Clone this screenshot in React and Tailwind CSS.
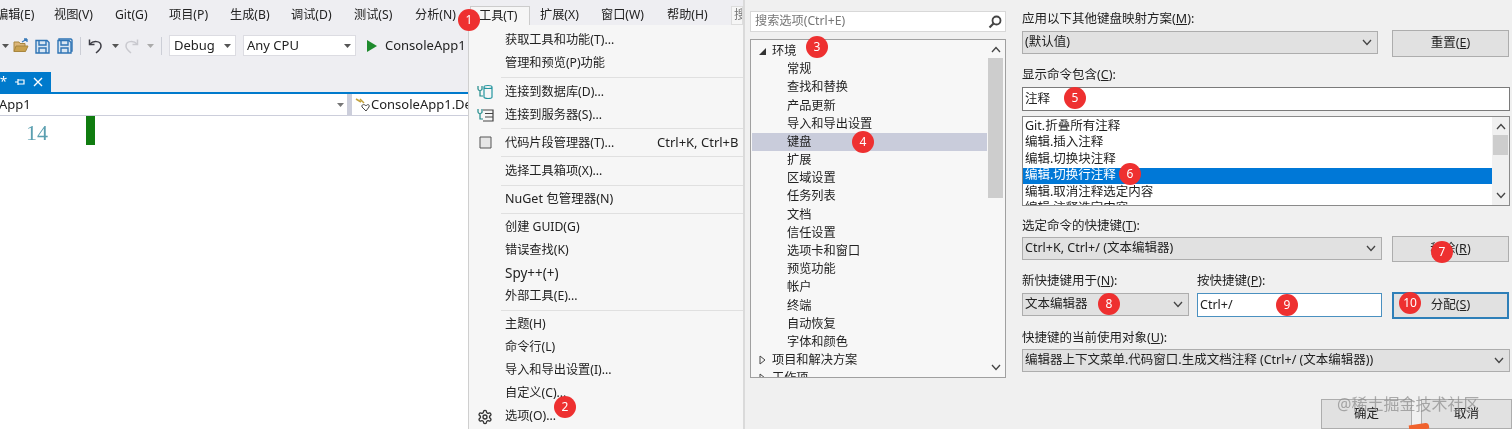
import React from "react";

const menuBar = [
  ["编辑(E)", "-ml-[4px] w-[58px]"],
  ["视图(V)", "w-[61px]"],
  ["Git(G)", "w-[54px]"],
  ["项目(P)", "w-[61px]"],
  ["生成(B)", "w-[61px]"],
  ["调试(D)", "w-[63px]"],
  ["测试(S)", "w-[61px]"],
  ["分析(N)", "w-[55px]"],
];
const menuBar2 = [
  ["扩展(X)", "w-[71px] pl-[10px]"],
  ["窗口(W)", "w-[66px]"],
  ["帮助(H)", "w-[64px]"],
];

function Chevron({ up }) {
  return (
    <svg width="10" height="7" viewBox="0 0 10 7" fill="none" stroke="#444" strokeWidth="1.3">
      <path d={up ? "M1 6 L5 1.5 L9 6" : "M1 1 L5 5.5 L9 1"} />
    </svg>
  );
}
function Caret({ color = "#555" }) {
  return (
    <svg width="7" height="4" viewBox="0 0 7 4" className="shrink-0">
      <path d="M0 0 H7 L3.5 4 Z" fill={color} />
    </svg>
  );
}
function FolderIcon() {
  return (
    <svg width="16" height="15" viewBox="0 0 16 15">
      <path d="M1 4 H6 L7 5.5 H12 V13.5 H1 Z" fill="#dcb67a" stroke="#a8863f" />
      <path d="M3 8 H15 L12.5 13.5 H1 Z" fill="#c9a14f" stroke="#a8863f" />
      <path d="M9 4 L14 1 M14 1 L11 1 M14 1 L14 4" stroke="#3a7ab8" strokeWidth="1.3" fill="none" />
    </svg>
  );
}
function SaveIcon({ double }) {
  return (
    <svg width="16" height="16" viewBox="0 0 16 16" fill="none" stroke="#2f74b5" strokeWidth="1.4">
      {double && <path d="M2 3 V1 H14 L15 2 V13 H14" />}
      <path d="M1 2.5 H12 L14 4.5 V15 H1 Z" fill="#d8e6f3" />
      <path d="M4 2.5 V7 H11 V2.5 M4 15 V10 H11 V15" />
    </svg>
  );
}
function UndoIcon({ redo }) {
  return (
    <svg width="15" height="16" viewBox="0 0 15 16" fill="none" stroke={redo ? "#c9c9cf" : "#3c3c44"} strokeWidth="1.5" className={redo ? "-scale-x-100" : ""}>
      <path d="M1.5 1.5 V6.5 H6.5" />
      <path d="M2 6 C5 2.5 13 2.5 13 8 C13 11 10.5 13 8 15" />
    </svg>
  );
}
function DbIcon({ server }) {
  return (
    <svg width="17" height="16" viewBox="0 0 17 16" fill="none" strokeWidth="1.2">
      <path d="M1 2 V5 C1 7 5 7 5 5 V2 M3 7 V12 H6" stroke="#1f8a8a" />
      {server ? (
        <path d="M6 3 H16 V14 H6 M8 6.500 H16 M8 10 H16" stroke="#444" />
      ) : (
        <path d="M7 3 C7 1 15 1 15 3 V13 C15 15 7 15 7 13 Z M7 3 C7 5 15 5 15 3" stroke="#2496a0" />
      )}
    </svg>
  );
}
function GearIcon() {
  return (
    <svg width="16" height="16" viewBox="0 0 24 24" fill="none" stroke="#333" strokeWidth="2">
      <path d="M12.2 2h-.4a2 2 0 0 0-2 2v.2a2 2 0 0 1-1 1.700l-.4.300a2 2 0 0 1-2 0l-.2-.1a2 2 0 0 0-2.700.700l-.2.400a2 2 0 0 0 .7 2.700l.2.100a2 2 0 0 1 1 1.700v.5a2 2 0 0 1-1 1.700l-.2.100a2 2 0 0 0-.7 2.700l.2.400a2 2 0 0 0 2.700.700l.2-.1a2 2 0 0 1 2 0l.4.300a2 2 0 0 1 1 1.700v.2a2 2 0 0 0 2 2h.4a2 2 0 0 0 2-2v-.2a2 2 0 0 1 1-1.700l.4-.300a2 2 0 0 1 2 0l.2.100a2 2 0 0 0 2.700-.700l.2-.400a2 2 0 0 0-.7-2.700l-.2-.1a2 2 0 0 1-1-1.700v-.5a2 2 0 0 1 1-1.700l.2-.1a2 2 0 0 0 .7-2.700l-.2-.4a2 2 0 0 0-2.700-.7l-.2.100a2 2 0 0 1-2 0l-.4-.300a2 2 0 0 1-1-1.700V4a2 2 0 0 0-2-2z" />
      <circle cx="12" cy="12" r="3" />
    </svg>
  );
}
function MenuRow({ icon, text, shortcut, textClass = "" }) {
  return (
    <div className="h-[23px] flex items-center relative">
      <div className="w-[36px] shrink-0 flex justify-center pr-[4px]">{icon}</div>
      <span className={`whitespace-nowrap ${textClass}`}>{text}</span>
      {shortcut && <span className="absolute left-[188px] whitespace-nowrap text-[13px]">{shortcut}</span>}
    </div>
  );
}
function MenuSep() {
  return (
    <div className="h-[5.200px] pl-[32px] flex items-center">
      <div className="h-px w-full bg-[#e0e0e0]" />
    </div>
  );
}
function Acc({ pre, k, post = "):" }) {
  return (
    <>
      {pre}(<span className="underline">{k}</span>{post}
    </>
  );
}
function Label({ className = "", children }) {
  return <div className={`h-4 leading-4 whitespace-nowrap text-[#222] ${className}`}>{children}</div>;
}
function Combo({ className = "", children }) {
  return (
    <div className={`h-[23px] bg-[#e1e1e1] border border-[#adadad] flex items-center justify-between px-[2px] ${className}`}>
      <span className="whitespace-nowrap">{children}</span>
      <span className="mr-[3px]"><Chevron /></span>
    </div>
  );
}
function Button({ className = "", children }) {
  return (
    <div className={`bg-[#e1e1e1] flex items-center justify-center ${className}`}>
      <span className="whitespace-nowrap">{children}</span>
    </div>
  );
}
const tree = ["常规", "查找和替换", "产品更新", "导入和导出设置", "键盘", "扩展", "区域设置", "任务列表", "文档", "信任设置", "选项卡和窗口", "预览功能", "帐户", "终端", "自动恢复", "字体和颜色"];
const commands = ["Git.折叠所有注释", "编辑.插入注释", "编辑.切换块注释", "编辑.切换行注释", "编辑.取消注释选定内容", "编辑.注释选定内容"];

const badges = [
  ["1", "left-[458px] top-[9px]"],
  ["2", "left-[554px] top-[396px]"],
  ["3", "left-[806px] top-[36px]"],
  ["4", "left-[852px] top-[131px]"],
  ["5", "left-[1064px] top-[87px]"],
  ["6", "left-[1119px] top-[163px]"],
  ["7", "left-[1431px] top-[241px]"],
  ["8", "left-[1098px] top-[293px]"],
  ["9", "left-[1276px] top-[294px]"],
  ["10", "left-[1399px] top-[292px]"],
];

export default function App() {
  return (
    <div className="relative flex w-[1512px] h-[429px] overflow-hidden text-[12.2px] text-[#222] blur-[0.3px] [font-family:'Noto_Sans','Noto_Sans_CJK_SC',sans-serif]">
      {/* Visual Studio */}
      <div className="relative w-[743px] shrink-0 flex flex-col bg-[#eeeef2]">
        <div className="h-[25px] flex items-center shrink-0 pt-[6px] overflow-hidden">
          {menuBar.map(([t, w]) => (
            <div key={t} className={`${w} shrink-0 whitespace-nowrap`}>{t}</div>
          ))}
          <div className="w-[60px] h-[19px] shrink-0 bg-[#f6f6f6] border border-b-0 border-[#ccc] pl-[8px] flex items-center whitespace-nowrap">工具(T)</div>
          {menuBar2.map(([t, w]) => (
            <div key={t} className={`${w} shrink-0 whitespace-nowrap`}>{t}</div>
          ))}
          <div className="bg-[#f6f6f6] h-[19px] flex-1 pl-[2px] flex items-center text-[#777] overflow-hidden border border-[#ddd]">搜</div>
        </div>
        <div className="h-[41px] shrink-0 flex items-center pl-[2px]">
          <Caret />
          <div className="ml-[4px]"><FolderIcon /></div>
          <div className="ml-[6px]"><SaveIcon /></div>
          <div className="ml-[6px]"><SaveIcon double /></div>
          <div className="w-px h-[18px] bg-[#ccced6] ml-[7px]" />
          <div className="ml-[7px]"><UndoIcon /></div>
          <div className="ml-[9px]"><Caret /></div>
          <div className="ml-[5px]"><UndoIcon redo /></div>
          <div className="ml-[8px]"><Caret color="#aaa" /></div>
          <div className="w-px h-[18px] bg-[#ccced6] ml-[7px]" />
          <div className="ml-[7px] w-[67px] h-[21px] bg-white border border-[#dcdce2] flex items-center justify-between pl-[4px] pr-[4px] text-[13px]">Debug<Caret /></div>
          <div className="ml-[7px] w-[113px] h-[21px] bg-white border border-[#dcdce2] flex items-center justify-between pl-[3px] pr-[4px] text-[13px]">Any CPU<Caret /></div>
          <svg width="12" height="14" viewBox="0 0 12 14" className="ml-[10px]"><path d="M1 1 L11 7 L1 13 Z" fill="#1e8a2d" /></svg>
          <span className="ml-[7px] text-[13px] whitespace-nowrap">ConsoleApp1</span>
        </div>
        <div className="h-[6px] shrink-0" />
        <div className="h-[20px] shrink-0 w-[51px] bg-[#007acc] text-white flex items-center pl-[1px] gap-[8px]">
          <span className="text-[13px] -ml-[1px]">*</span>
          <svg width="10" height="10" viewBox="0 0 10 10" fill="none" stroke="#fff" strokeWidth="1.200"><path d="M0 5 H3 M3 2 V8 M3 3 H9 V7 H3" /></svg>
          <svg width="10" height="10" viewBox="0 0 10 10" fill="none" stroke="#fff" strokeWidth="1.400"><path d="M1 1 L9 9 M9 1 L1 9" /></svg>
        </div>
        <div className="h-[2px] shrink-0 bg-[#007acc]" />
        <div className="h-[22px] shrink-0 flex bg-white border-b border-[#cccedb]">
          <div className="w-[347px] flex items-center justify-between pr-[3px] pt-px overflow-hidden text-[13px]">
            <span className="-ml-[1px]">App1</span><Caret color="#777" />
          </div>
          <div className="w-[5px] bg-[#cccedb]" />
          <div className="flex-1 flex items-center pl-[3px] pt-px gap-[1px] text-[13px] whitespace-nowrap overflow-hidden">
            <svg width="15" height="14" viewBox="0 0 15 14" fill="none"><path d="M1 1 L6 4 M5 1 L9 5" stroke="#c2a13a" strokeWidth="1.500" /><path d="M11 13 L7 9 C6 6 10 6 11 8 C12 6 15 6 14 9 Z" stroke="#444" strokeWidth="1" /></svg>
            ConsoleApp1.Demo
          </div>
        </div>
        <div className="flex-1 bg-white flex items-start">
          <div className="w-[86px] shrink-0 pl-[26px] pt-[5px] text-[22px] leading-[24px] text-[#5a9fb0] [font-family:'Liberation_Serif',serif]">14</div>
          <div className="w-[9px] h-[29px] bg-[#107c10]" />
        </div>

        {/* Tools menu */}
        <div className="absolute left-[468px] top-[25px] w-[275px] h-[404px] bg-[#f6f6f6] border-l border-[#cfcfcf] pt-[4px]">
          <MenuRow text="获取工具和功能(T)..." />
          <MenuRow text="管理和预览(P)功能" />
          <MenuSep />
          <MenuRow icon={<DbIcon />} text="连接到数据库(D)..." />
          <MenuRow icon={<DbIcon server />} text="连接到服务器(S)..." />
          <MenuSep />
          <MenuRow
            icon={<svg width="13" height="14" viewBox="0 0 13 14" fill="#e6e6e6" stroke="#555"><path d="M1 1 H12 V12 H1 Z" /></svg>}
            text="代码片段管理器(T)..."
            shortcut="Ctrl+K, Ctrl+B"
          />
          <MenuSep />
          <MenuRow text="选择工具箱项(X)..." />
          <MenuSep />
          <MenuRow text="NuGet 包管理器(N)" textClass="text-[12.500px]" />
          <MenuSep />
          <MenuRow text="创建 GUID(G)" />
          <MenuRow text="错误查找(K)" />
          <MenuRow text="Spy++(+)" textClass="text-[13.500px]" />
          <MenuRow text="外部工具(E)..." />
          <MenuSep />
          <MenuRow text="主题(H)" />
          <MenuRow text="命令行(L)" />
          <MenuRow text="导入和导出设置(I)..." />
          <MenuRow text="自定义(C)..." />
          <MenuRow icon={<GearIcon />} text="选项(O)..." />
        </div>
      </div>

      {/* Options dialog */}
      <div className="flex-1 flex bg-[#f0f0f0] border-l-2 border-[#dadada] overflow-hidden">
        <div className="w-[263px] shrink-0 pl-[5px] pt-[11px]">
          <div className="w-[256px] h-[21px] bg-white border border-[#d8d8d8] flex items-center justify-between pl-[4px] pr-[3px] text-[#777]">
            <span>搜索选项(Ctrl+E)</span>
            <svg width="14" height="14" viewBox="0 0 14 14" fill="none" stroke="#444" strokeWidth="1.800"><circle cx="8.500" cy="5.500" r="4" /><path d="M5.500 8.500 L1.500 12.500" strokeWidth="2.200" /></svg>
          </div>
          <div className="relative mt-[7px] w-[256px] h-[339px] bg-[#f7f7f7] border border-[#a0a0a0] overflow-hidden pt-[2px]">
            <div className="h-[18.200px] flex items-center pl-[8px]">
              <svg width="7" height="7" viewBox="0 0 7 7"><path d="M7 0 V7 H0 Z" fill="#333" /></svg>
              <span className="ml-[6px]">环境</span>
            </div>
            {tree.map((t) => (
              <div key={t} className={`h-[18.200px] flex items-center pl-[35px] mr-[17px] ml-px whitespace-nowrap ${t === "键盘" ? "bg-[#c9ccdb]" : ""}`}>{t}</div>
            ))}
            {["项目和解决方案", "工作项"].map((t) => (
              <div key={t} className="h-[18.200px] flex items-center pl-[8px] whitespace-nowrap">
                <svg width="7" height="10" viewBox="0 0 7 10" fill="none" stroke="#444"><path d="M1 1 L6 5 L1 9 Z" /></svg>
                <span className="ml-[6px]">{t}</span>
              </div>
            ))}
            <div className="absolute right-[1px] top-0 bottom-0 w-[17px] flex flex-col items-center justify-between py-[6px] bg-[#f7f7f7]">
              <Chevron up />
              <Chevron />
            </div>
            <div className="absolute right-[2px] top-[18px] w-[15px] h-[140px] bg-[#cdcdcd]" />
          </div>
        </div>

        <div className="w-[488px] shrink-0 ml-[14px] pt-[11px] flex flex-col text-[12.500px]">
          <Label><Acc pre="应用以下其他键盘映射方案" k="M" /></Label>
          <div className="mt-[3px] h-[27px] flex justify-between shrink-0">
            <Combo className="w-[356px] mt-[1px]">(默认值)</Combo>
            <Button className="w-[117px] h-[27px] mr-px border border-[#adadad]"><Acc pre="重置" k="E" post=")" /></Button>
          </div>
          <Label className="mt-[10px]"><Acc pre="显示命令包含" k="C" /></Label>
          <div className="mt-[4px] h-[24px] shrink-0 bg-white border border-[#7a7a7a] flex items-center px-[2px]">注释</div>
          <div className="mt-[5px] h-[90px] shrink-0 relative bg-white border border-[#8a8a8a] overflow-hidden pt-[1px]">
            {commands.map((t) => (
              <div key={t} className={`h-[16.500px] flex items-center pl-[2px] mr-[17px] whitespace-nowrap ${t === "编辑.切换行注释" ? "bg-[#0078d7] text-white" : ""}`}>{t}</div>
            ))}
            <div className="absolute right-0 top-0 bottom-0 w-[17px] bg-[#f0f0f0] flex flex-col items-center justify-between py-[6px]">
              <Chevron up />
              <Chevron />
            </div>
            <div className="absolute right-[1px] top-[18px] w-[15px] h-[20px] bg-[#cdcdcd]" />
          </div>
          <Label className="mt-[12px]"><Acc pre="选定命令的快捷键" k="T" /></Label>
          <div className="mt-[2px] h-[26px] flex justify-between shrink-0">
            <Combo className="w-[360px] mt-[1px]">Ctrl+K, Ctrl+/ (文本编辑器)</Combo>
            <Button className="w-[117px] h-[26px] mr-px border border-[#adadad]"><Acc pre="移除" k="R" post=")" /></Button>
          </div>
          <div className="mt-[11px] flex h-4 shrink-0">
            <Label className="w-[175px]"><Acc pre="新快捷键用于" k="N" /></Label>
            <Label><Acc pre="按快捷键" k="P" /></Label>
          </div>
          <div className="mt-[3px] h-[27px] flex shrink-0">
            <Combo className="w-[167px] mt-[1px]">文本编辑器</Combo>
            <div className="ml-[8px] w-[185px] h-[24px] mt-[1px] bg-white border border-[#4a90c0] flex items-center px-[2px]">Ctrl+/</div>
            <Button className="ml-[10px] w-[117px] h-[27px] border-2 border-[#2e7fb8]"><Acc pre="分配" k="S" post=")" /></Button>
          </div>
          <Label className="mt-[11px]"><Acc pre="快捷键的当前使用对象" k="U" /></Label>
          <Combo className="mt-[3px] shrink-0">编辑器上下文菜单.代码窗口.生成文档注释 (Ctrl+/ (文本编辑器))</Combo>
          <div className="mt-[27px] flex justify-end gap-[9px] shrink-0 -mr-[2px]">
            <Button className="w-[91px] h-[30px] border border-[#adadad]">确定</Button>
            <Button className="w-[91px] h-[30px] border border-[#adadad]">取消</Button>
          </div>
        </div>
      </div>

      {badges.map(([n, pos]) => (
        <div key={n} className={`absolute ${pos} w-[22px] h-[22px] rounded-full bg-[#ee3030] text-white text-[12px] flex items-center justify-center`}>{n}</div>
      ))}
      <div className="absolute left-[1337px] top-[394px] text-[16px] leading-5 text-[#8a8a8a]/70 whitespace-nowrap">@稀土掘金技术社区</div>
      <div className="absolute left-[1409px] top-[424px] w-[20px] h-[6px] bg-[#f0622d] rounded-tr-[3px] -rotate-[8deg]" />
    </div>
  );
}
